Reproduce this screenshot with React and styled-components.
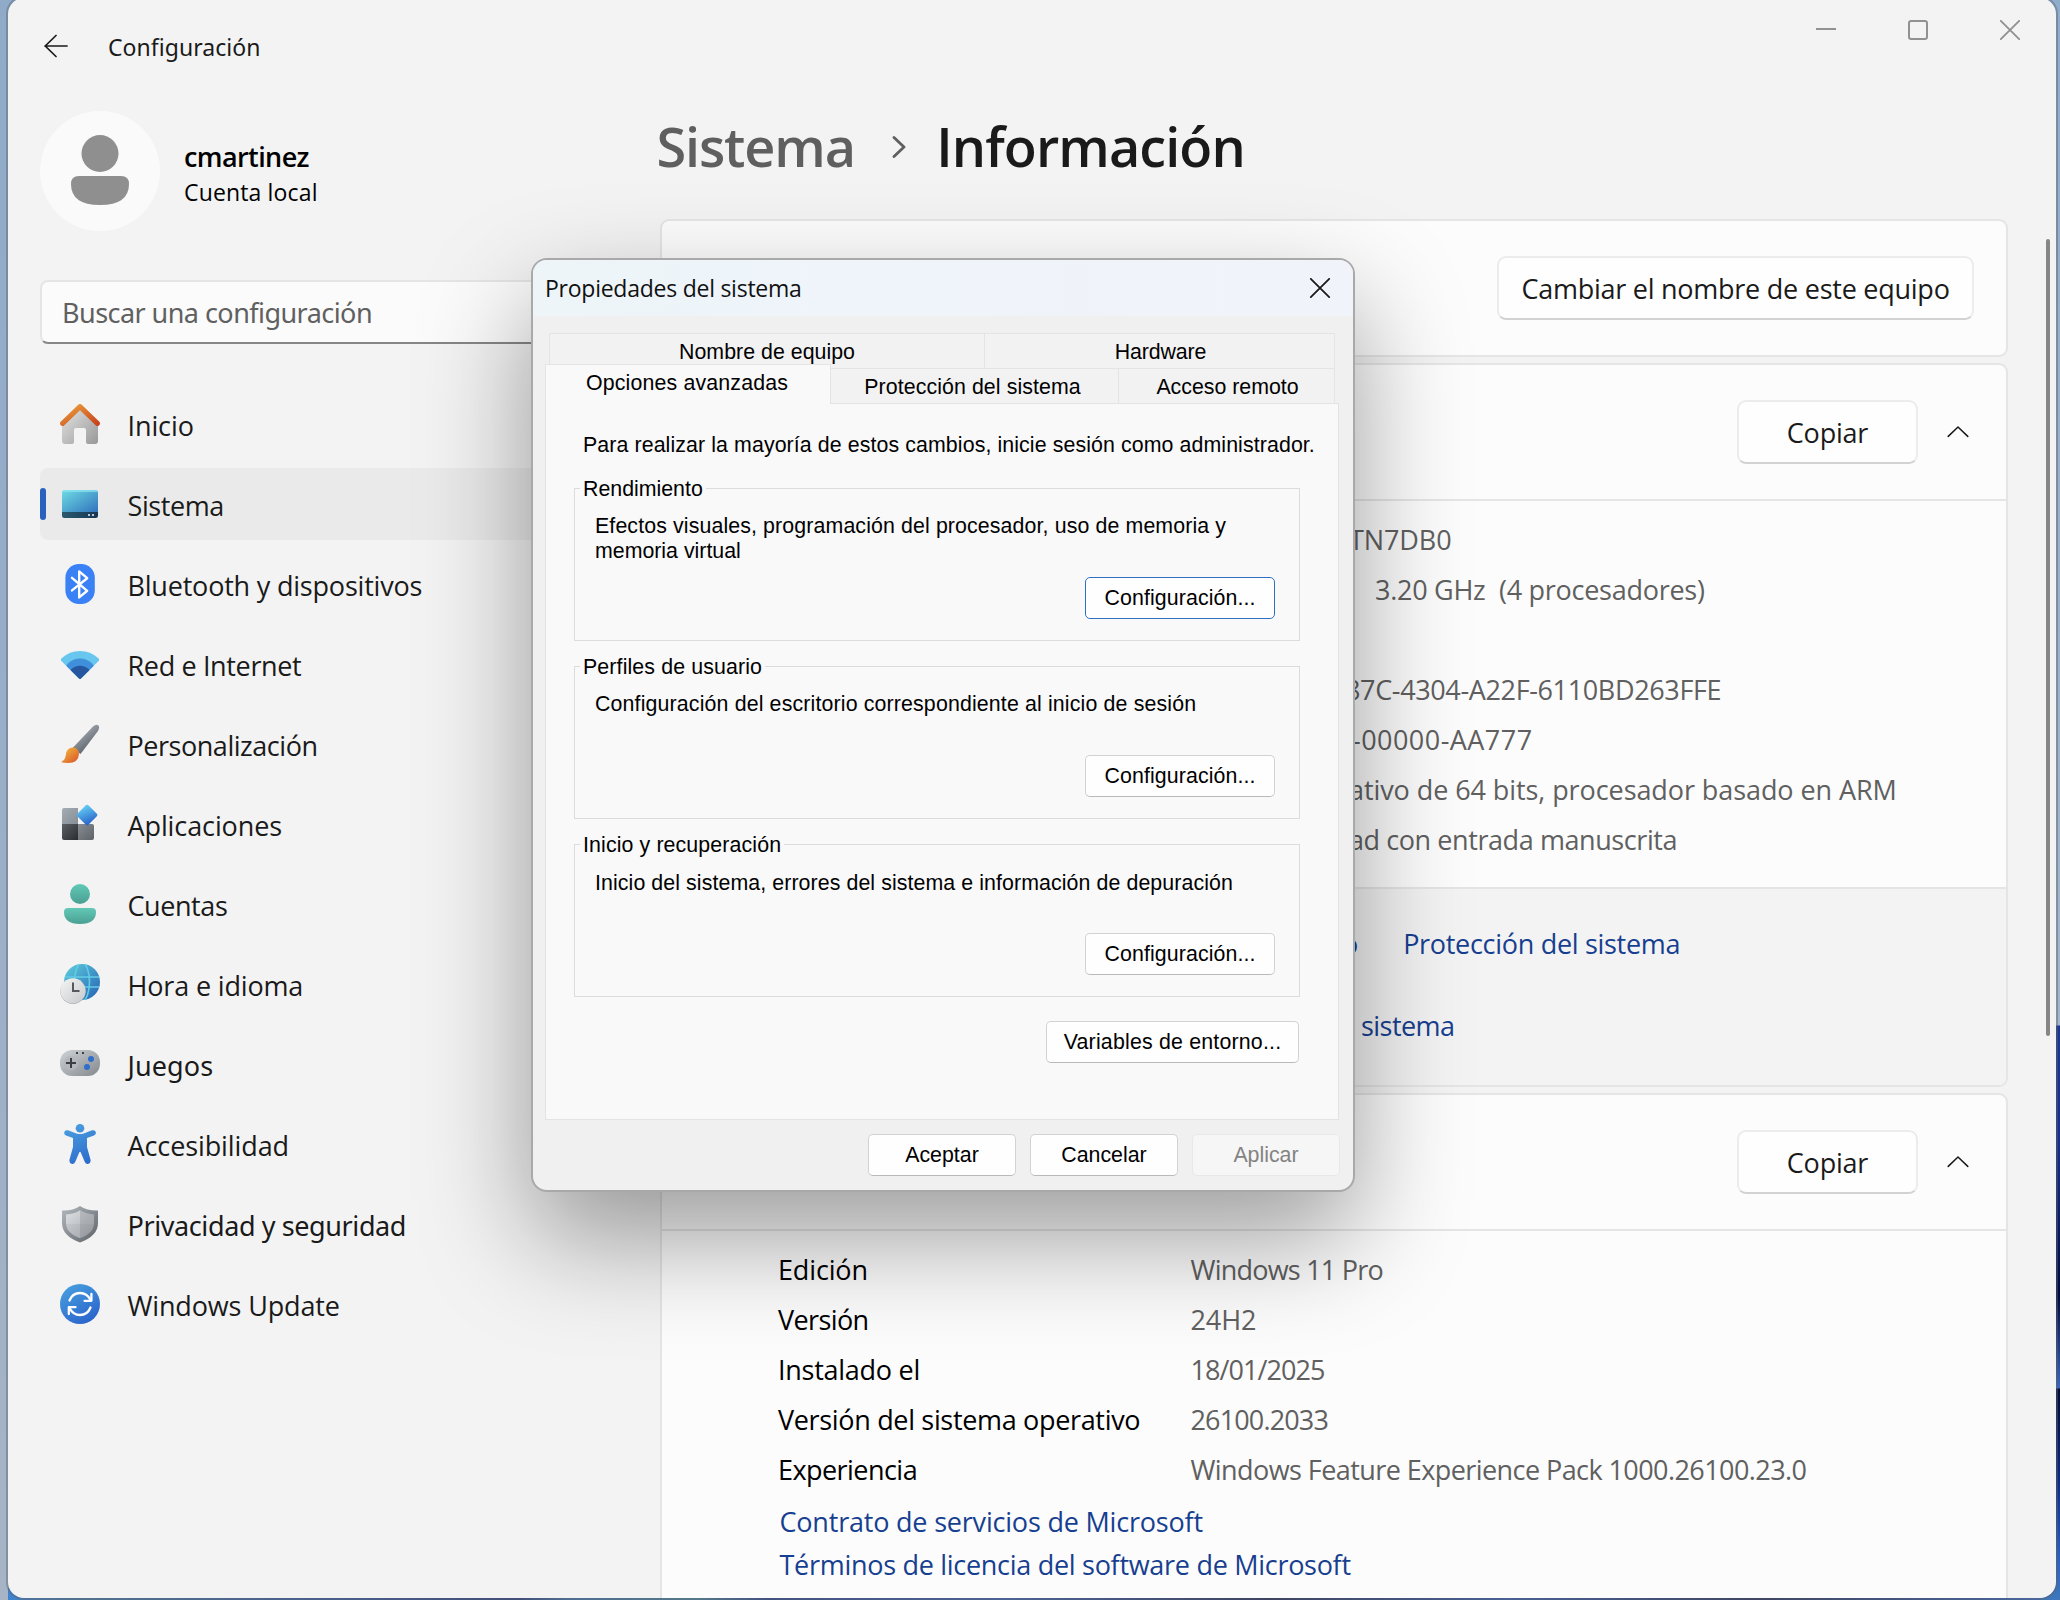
import React from 'react';
import styled, { createGlobalStyle, css } from 'styled-components';

const GlobalStyle = createGlobalStyle`
  *, *::before, *::after { box-sizing: border-box; }
  html, body { margin: 0; padding: 0; }
  body { width: 2060px; height: 1600px; overflow: hidden; }
  button { margin: 0; padding: 0; font: inherit; color: inherit; }
`;

/* ---------- text ---------- */

const HUMANIST = '"Open Sans", "Noto Sans", sans-serif';
const HUMANIST_SINGLE_STOREY = '"Noto Sans", "Open Sans", sans-serif';
const CLASSIC = '"Liberation Sans", Arial, sans-serif';

const TextSpan = styled.span`
  white-space: pre;
  font-family: ${(p) => (p.$single ? HUMANIST_SINGLE_STOREY : HUMANIST)};
  letter-spacing: ${(p) => p.$ls}px;
`;

/* Words with a "g" use the family whose g has a single storey. */
const T = ({ children, ls = -0.1 }) => (
  <TextSpan $single={/g/.test(children)} $ls={ls}>
    {children}
  </TextSpan>
);

const ClassicSpan = styled.span`
  white-space: pre;
  letter-spacing: ${(p) => p.$ls || 0}px;
`;

/* ---------- desktop and window ---------- */

const Desktop = styled.div`
  position: relative;
  width: 2060px;
  height: 1600px;
  overflow: hidden;
  padding: 0 4px 2px 8px;
  background:
    linear-gradient(90deg, #3f83d0 0, #4a7fa8 60px, #3b5a9e 330px, #2f3f7c 510px, #4576ad 560px, #4f8a9c 690px, #33458c 760px, #4263b0 1000px, #2a2c55 1260px, #3b5fae 1500px, #2c2f58 1750px, #3d6cc0 2040px)
      8px 1588px / 2032px 12px no-repeat,
    linear-gradient(180deg, #8fabc8 0, #97adc8 600px, #a6b4c6 1590px) 0 0 / 8px 1600px no-repeat,
    linear-gradient(180deg, #8facca 0, #a3b5cc 1025px, #1c3790 1026px, #16308a 1140px, #020a3e 1295px, #3a66b8 1388px, #050b34 1389px, #0b2a80 1480px, #2a62c0 1560px, #3d78bc 1600px)
      2040px 0 / 20px 1600px no-repeat,
    #8fabc8;
`;

const Window = styled.div`
  display: flex;
  flex-direction: column;
  width: 2048px;
  height: 1600px;
  margin-top: -2px;
  background: #f3f3f3;
  border-radius: 16px;
  box-shadow: 0 0 0 2px rgba(90, 100, 115, 0.45);
  overflow: hidden;
`;

const TitleBar = styled.header`
  display: flex;
  justify-content: space-between;
  flex: none;
  height: 92px;
  padding: 2px 36px 0 36px;
`;

const TitleLeft = styled.div`
  display: flex;
  align-items: center;
  gap: 40px;
  height: 92px;
  font-size: 23px;
  color: #1a1a1a;
`;

const WindowTitle = styled.div`
  padding-top: 2px;
`;

const CaptionButtons = styled.div`
  display: flex;
  gap: 72px;
  padding-top: 20px;
`;

const Body = styled.div`
  display: flex;
  flex: 1;
  min-height: 0;
`;

/* ---------- sidebar ---------- */

const Sidebar = styled.aside`
  display: flex;
  flex-direction: column;
  width: 620px;
  flex: none;
  padding: 21px 20px 0 32px;
`;

const Profile = styled.div`
  display: flex;
  align-items: center;
  gap: 24px;
  height: 120px;
`;

const Avatar = styled.div`
  display: flex;
  width: 120px;
  height: 120px;
  border-radius: 50%;
  background: #fafafa;
`;

const ProfileText = styled.div`
  display: flex;
  flex-direction: column;
  padding-top: 6px;
  color: #000;
`;

const UserName = styled.div`
  font-size: 27px;
  line-height: 35px;
  font-weight: 600;
`;

const UserKind = styled.div`
  font-size: 23px;
  line-height: 32px;
`;

const SearchBox = styled.div`
  display: flex;
  align-items: center;
  height: 64px;
  margin-top: 49px;
  padding: 1px 0 0 20px;
  border: 2px solid #e5e5e5;
  border-bottom-color: #868686;
  border-radius: 8px;
  background: #fbfbfb;
  font-size: 27px;
  color: #606060;
`;

const Nav = styled.nav`
  display: flex;
  flex-direction: column;
  gap: 8px;
  margin-top: 44px;
`;

const NavItem = styled.div`
  display: flex;
  align-items: center;
  height: 72px;
  border-radius: 8px;
  font-size: 27px;
  color: #1a1a1a;
  background: ${(p) => (p.$active ? '#eaeaea' : 'transparent')};
`;

const NavMarker = styled.div`
  width: 6px;
  height: 32px;
  margin-right: 14px;
  border-radius: 3px;
  background: ${(p) => (p.$active ? '#2962bd' : 'transparent')};
`;

const NavLabel = styled.div`
  padding: 2px 0 0 27.5px;
`;

/* ---------- main column ---------- */

const Main = styled.main`
  display: flex;
  flex-direction: column;
  flex: 1;
  padding: 0 48px 0 32px;
`;

const Breadcrumb = styled.h1`
  display: flex;
  align-items: center;
  height: 80px;
  margin: 17px 0 32px -3.5px;
  font-size: 54px;
  line-height: 80px;
  font-weight: 600;
  color: #1a1a1a;
`;

const Crumb = styled.span`
  color: ${(p) => (p.$muted ? '#5f5f5f' : '#1a1a1a')};
`;

const CrumbSeparator = styled.span`
  display: flex;
  margin: 0 30px 0 37.5px;
`;

const Cards = styled.div`
  display: flex;
  flex-direction: column;
  gap: 6px;
`;

const Card = styled.section`
  display: flex;
  flex-direction: column;
  flex: none;
  width: 1348px;
  height: ${(p) => p.$height}px;
  border: 2px solid #e5e5e5;
  border-radius: 9px;
  background: #fcfcfc;
  overflow: hidden;
`;

const CardHeader = styled.div`
  display: flex;
  align-items: center;
  justify-content: flex-end;
  flex: none;
  height: ${(p) => (p.$divided ? 136 : 134)}px;
  padding: 0 ${(p) => (p.$divided ? 36 : 32)}px 0 0;
  border-bottom: ${(p) => (p.$divided ? '2px solid #e5e5e5' : 'none')};
`;

const FluentButton = styled.button`
  display: flex;
  align-items: center;
  justify-content: center;
  width: ${(p) => p.$width}px;
  height: 64px;
  padding-top: 1px;
  border: 2px solid #ececec;
  border-bottom-color: #d2d2d2;
  border-radius: 9px;
  background: #fefefe;
  font-size: 27px;
  color: #1a1a1a;
`;

const Expander = styled.span`
  display: flex;
  margin-left: 28px;
`;

const Details = styled.dl`
  display: flex;
  flex-direction: column;
  flex: none;
  margin: 0;
  padding: 13px 0 0 116px;
  font-size: 27px;
`;

const DetailRow = styled.div`
  display: flex;
  align-items: center;
  height: 50px;
`;

const DetailLabel = styled.dt`
  width: 412px;
  color: #000;
`;

const DetailValue = styled.dd`
  margin: 0 0 0 ${(p) => p.$inset || 0}px;
  color: #606060;
`;

const CardFooter = styled.div`
  display: flex;
  flex-direction: column;
  flex: none;
  height: 198px;
  margin-top: auto;
  padding-top: 14px;
  border-top: 2px solid #e5e5e5;
  background: #f3f3f3;
`;

const FooterRow = styled.div`
  display: flex;
  align-items: center;
  gap: 45px;
  height: 82px;
  padding-left: ${(p) => p.$inset}px;
  font-size: 27px;
`;

const Link = styled.a`
  color: #173f90;
  font-size: 27px;
  line-height: 42px;
`;

const LinkList = styled.div`
  display: flex;
  flex-direction: column;
  padding: 7px 0 0 117.5px;
`;

const ScrollThumb = styled.div`
  position: absolute;
  left: 2046px;
  top: 239px;
  width: 4px;
  height: 797px;
  border-radius: 2px;
  background: #868686;
`;

/* ---------- dialog ---------- */

const Dialog = styled.div`
  position: absolute;
  left: 531px;
  top: 258px;
  display: flex;
  flex-direction: column;
  width: 824px;
  height: 934px;
  border: 2px solid #a9a9a9;
  border-radius: 16px;
  background: #f0f0f0;
  box-shadow: 0 46px 110px rgba(0, 0, 0, 0.38);
  font-family: ${CLASSIC};
  font-size: 21.33px;
  line-height: 25px;
  color: #000;
  overflow: hidden;
`;

const DialogTitle = styled.div`
  display: flex;
  align-items: center;
  justify-content: space-between;
  flex: none;
  height: 56px;
  padding: 0 23px 0 12px;
  background: linear-gradient(90deg, #edf5f9, #f1f3fa);
  font-size: 23px;
  color: #111;
`;

const TabArea = styled.div`
  display: flex;
  flex-direction: column;
  flex: none;
  padding: 17px 14px 0 12px;
`;

const TabRow = styled.div`
  display: flex;
  padding: 0 4px 0 ${(p) => (p.$front ? 0 : 4)}px;
  height: ${(p) => (p.$front ? 36 : 35)}px;
`;

const Tab = styled.div`
  display: flex;
  justify-content: center;
  width: ${(p) => p.$width}px;
  height: 35px;
  margin-top: 0;
  padding-top: 6px;
  padding-left: ${(p) => p.$padLeft || 0}px;
  padding-right: ${(p) => p.$padRight || 0}px;
  border: 1px solid #e4e4e4;
  border-width: 1px 1px 0 0;
  background: #f2f2f2;
  ${(p) =>
    p.$first &&
    css`
      border-left-width: 1px;
    `}
  ${(p) =>
    p.$active &&
    css`
      z-index: 1;
      height: 40px;
      margin-top: -4px;
      border-left-width: 1px;
      background: #f9f9f9;
    `}
`;

const TabPage = styled.div`
  display: flex;
  flex-direction: column;
  height: 717px;
  margin-top: -1px;
  padding: 29px 38px 0 28px;
  border: 1px solid #e3e3e3;
  background: #f9f9f9;
`;

const Notice = styled.p`
  margin: 0 -30px 0 9px;
`;

const Groups = styled.div`
  display: flex;
  flex-direction: column;
  margin-top: 16px;
`;

const Group = styled.fieldset`
  display: flex;
  flex-direction: column;
  height: 167px;
  min-width: 0;
  margin: 0 0 11px;
  padding: 11px 24px 0 20px;
  border: 1px solid #dcdcdc;
`;

const GroupTitle = styled.legend`
  margin-left: -15px;
  padding: 2px 3px 0;
  line-height: 26px;
`;

const GroupText = styled.p`
  margin: 0;
  padding-top: ${(p) => p.$drop}px;
  height: 52px;
`;

const ButtonRow = styled.div`
  display: flex;
  justify-content: flex-end;
  margin: ${(p) => p.$top || 0}px ${(p) => p.$right || 0}px 0 0;
`;

const ClassicButton = styled.button`
  display: flex;
  align-items: center;
  justify-content: center;
  width: ${(p) => p.$width}px;
  height: 42px;
  border: 1px solid ${(p) => (p.$focus ? '#2f6fc4' : p.$disabled ? '#e8e8e8' : '#d2d2d2')};
  border-bottom-color: ${(p) => (p.$focus ? '#2f6fc4' : p.$disabled ? '#e8e8e8' : '#b9b9b9')};
  border-radius: 5px;
  background: ${(p) => (p.$disabled ? '#f6f6f6' : '#fefefe')};
  color: ${(p) => (p.$disabled ? '#838383' : '#000')};
`;

const DialogFooter = styled.div`
  display: flex;
  justify-content: flex-end;
  gap: 14px;
  padding: 14px 13px 0 0;
`;

/* ---------- line glyphs ---------- */

const BackArrow = () => (
  <svg width="24" height="24" viewBox="0 0 24 24" fill="none" stroke="#1a1a1a" strokeWidth="1.7" strokeLinecap="round" strokeLinejoin="round">
    <path d="M1 12H23M12 1.5L1.2 12L12 22.5" />
  </svg>
);

const Cross = ({ color }) => (
  <svg width="20" height="20" viewBox="0 0 20 20" fill="none" stroke={color} strokeWidth="1.8" strokeLinecap="round">
    <path d="M0.8 0.8L19.2 19.2M19.2 0.8L0.8 19.2" />
  </svg>
);

const Minimise = () => (
  <svg width="20" height="20" viewBox="0 0 20 20" fill="none" stroke="#919191" strokeWidth="2">
    <path d="M0 9H20" />
  </svg>
);

const Maximise = () => (
  <svg width="20" height="20" viewBox="0 0 20 20" fill="none" stroke="#919191" strokeWidth="2">
    <rect x="1" y="1" width="18" height="18" rx="2.2" />
  </svg>
);

const ChevronRight = () => (
  <svg width="14" height="22" viewBox="0 0 14 22" fill="none" stroke="#5f5f5f" strokeWidth="2.8" strokeLinecap="round" strokeLinejoin="round">
    <path d="M2 1.5L12 11L2 20.5" />
  </svg>
);

const ChevronUp = () => (
  <svg width="24" height="14" viewBox="0 0 24 14" fill="none" stroke="#1a1a1a" strokeWidth="1.5" strokeLinecap="round" strokeLinejoin="round">
    <path d="M2.2 11.4L12 2L21.8 11.4" />
  </svg>
);

const AvatarGlyph = () => (
  <svg width="120" height="120" viewBox="0 0 120 120" fill="#8f8f8f">
    <circle cx="60" cy="42.5" r="18.5" />
    <path d="M39 65H81Q89 65 89 73Q89 94 60 94Q31 94 31 73Q31 65 39 65Z" />
  </svg>
);

/* ---------- sidebar icons ---------- */

const Icon = ({ children }) => (
  <svg width="40" height="40" viewBox="0 0 40 40" fill="none">
    {children}
  </svg>
);

const Grad = ({ id, from, to, x2 = 1, y2 = 1 }) => (
  <linearGradient id={id} x1="0" y1="0" x2={x2} y2={y2}>
    <stop offset="0" stopColor={from} />
    <stop offset="1" stopColor={to} />
  </linearGradient>
);

const HomeIcon = () => (
  <Icon>
    <defs>
      <Grad id="homeWall" from="#e6e6e6" to="#989898" />
      <Grad id="homeRoof" from="#eca03c" to="#c8441c" />
    </defs>
    <path d="M2 19L20 3L38 19V37Q38 40 35 40H28Q26 40 26 38V26Q26 24 24 24H16Q14 24 14 26V38Q14 40 12 40H5Q2 40 2 37Z" fill="url(#homeWall)" />
    <path d="M2.6 19.4L20 2.6L37.4 19.4" stroke="url(#homeRoof)" strokeWidth="5" strokeLinecap="round" strokeLinejoin="round" />
  </Icon>
);

const SystemIcon = () => (
  <Icon>
    <defs>
      <Grad id="sysScreen" from="#6fdde4" to="#2f70bc" />
      <Grad id="sysBar" from="#2a5a70" to="#163654" x2={1} y2={0} />
      <clipPath id="sysClip">
        <rect x="2" y="6" width="36" height="28" rx="2.5" />
      </clipPath>
    </defs>
    <g clipPath="url(#sysClip)">
      <rect x="2" y="6" width="36" height="23" fill="url(#sysScreen)" />
      <rect x="2" y="6" width="36" height="2" fill="#8fe6f2" opacity="0.7" />
      <rect x="2" y="28" width="36" height="6" fill="url(#sysBar)" />
    </g>
    <rect x="28" y="30" width="2" height="2" fill="#b9c9d6" />
    <rect x="32" y="30" width="2" height="2" fill="#b9c9d6" />
  </Icon>
);

const BluetoothIcon = () => (
  <Icon>
    <rect x="5.4" y="0" width="29.4" height="40" rx="13.5" fill="#3a81f5" />
    <path d="M12 13.8L27.2 26.8L19.2 33.4V7.4L27.2 14.2L12 26.4" stroke="#fff" strokeWidth="2.4" strokeLinecap="round" strokeLinejoin="round" />
  </Icon>
);

const WifiIcon = () => (
  <Icon>
    <defs>
      <clipPath id="wifiClip">
        <path d="M1.4 17Q0.2 15.6 1.6 14.3Q9.5 7 20 7Q30.5 7 38.4 14.3Q39.8 15.6 38.6 17L21.2 34.3Q20 35.5 18.8 34.3Z" />
      </clipPath>
    </defs>
    <g clipPath="url(#wifiClip)">
      <rect width="40" height="40" fill="#69c6ef" />
      <circle cx="20" cy="31" r="16.6" fill="#3f8fda" />
      <circle cx="20" cy="34" r="12.2" fill="#26569f" />
    </g>
  </Icon>
);

const BrushIcon = () => (
  <Icon>
    <defs>
      <Grad id="brushHandle" from="#c3c9cf" to="#4d545b" x2={0.7} y2={1} />
      <Grad id="brushTip" from="#f6c23e" to="#d8502a" />
    </defs>
    <path d="M12.5 24L33 2.4Q36.5 -0.5 38.6 1.8Q39.8 3.8 38 7L20.5 30Z" fill="url(#brushHandle)" />
    <path d="M1 38Q5.5 36 5.8 31Q6.5 23.5 13 23.5Q19 24 19 30Q18.5 39 8 39Q3 39 1 38Z" fill="url(#brushTip)" />
  </Icon>
);

const AppsIcon = () => (
  <Icon>
    <defs>
      <Grad id="appsA" from="#a4acb4" to="#858d95" />
      <Grad id="appsB" from="#5b6167" to="#2a2c2f" />
      <Grad id="appsC" from="#878d93" to="#5d6267" />
      <linearGradient id="appsD" x1="0" y1="0.3" x2="1" y2="0.7">
        <stop offset="0" stopColor="#5fc6f2" />
        <stop offset="1" stopColor="#2c68cc" />
      </linearGradient>
    </defs>
    <path d="M18 20V4H4Q2 4 2 6V20Z" fill="url(#appsA)" />
    <path d="M2 20H18V36H4Q2 36 2 34Z" fill="url(#appsB)" />
    <path d="M18 20H32Q34 20 34 22V34Q34 36 32 36H18Z" fill="url(#appsC)" />
    <rect x="19.3" y="3.3" width="15.6" height="15.6" rx="1.8" transform="rotate(45 27.1 11.1)" fill="url(#appsD)" />
  </Icon>
);

const AccountsIcon = () => (
  <Icon>
    <defs>
      <Grad id="accHead" from="#62c9b6" to="#4a9f92" x2={0} />
    </defs>
    <circle cx="20" cy="10" r="10" fill="url(#accHead)" />
    <path d="M8 24H32Q36 24 36 28Q36 40 20 40Q4 40 4 28Q4 24 8 24Z" fill="url(#accHead)" />
  </Icon>
);

const TimeIcon = () => (
  <Icon>
    <defs>
      <Grad id="globe" from="#5fd0dc" to="#2560b4" />
      <Grad id="clock" from="#f5f5f5" to="#c6c8cb" />
      <clipPath id="globeClip">
        <circle cx="22" cy="18" r="18" />
      </clipPath>
    </defs>
    <circle cx="22" cy="18" r="18" fill="url(#globe)" />
    <g clipPath="url(#globeClip)" stroke="#62cbe6" strokeWidth="1.6">
      <path d="M4 13H40M4 23H40" />
      <ellipse cx="22" cy="18" rx="7.5" ry="19" />
    </g>
    <circle cx="13" cy="27.4" r="12.6" fill="#9fa6ad" />
    <circle cx="13" cy="26.8" r="12.6" fill="url(#clock)" />
    <path d="M13 18.5V27H19.5" stroke="#55585c" strokeWidth="2" />
  </Icon>
);

const GamesIcon = () => (
  <Icon>
    <defs>
      <Grad id="pad" from="#ced3d8" to="#85898e" />
    </defs>
    <rect x="0" y="6" width="40" height="26" rx="12" fill="url(#pad)" />
    <circle cx="11" cy="19" r="7" fill="#b3b8bd" />
    <path d="M11 14V24M6 19H16" stroke="#3c3f43" strokeWidth="2" />
    <rect x="16" y="8" width="2" height="2" fill="#3c3f43" />
    <rect x="22" y="8" width="2" height="2" fill="#3c3f43" />
    <circle cx="31" cy="15" r="3" fill="#2f6fcb" />
    <circle cx="27" cy="23" r="3" fill="#2f6fcb" />
  </Icon>
);

const AccessibilityIcon = () => (
  <Icon>
    <defs>
      <linearGradient id="acs" gradientUnits="userSpaceOnUse" x1="10" y1="0" x2="28" y2="40">
        <stop offset="0" stopColor="#4a9fe0" />
        <stop offset="1" stopColor="#2d6bcb" />
      </linearGradient>
    </defs>
    <circle cx="20" cy="4.3" r="4.3" fill="url(#acs)" />
    <path
      d="M4.2 8.6Q4.8 5.5 8 6.3L17 9.7Q20 10.5 23 9.7L32 6.3Q35.2 5.5 36 8.6Q36 10.5 34 11.4L27 14V23L30.6 36Q31 39.3 28 40Q25.4 40.2 24.6 37.6L20.8 28.6Q20 27 19.2 28.6L15.4 37.6Q14.6 40.2 12 40Q9 39.3 9.4 36L13 23V14L6 11.4Q4 10.5 4.2 8.6Z"
      fill="url(#acs)"
    />
  </Icon>
);

const ShieldIcon = () => (
  <Icon>
    <defs>
      <Grad id="shieldOut" from="#b3b9bf" to="#5d6267" />
      <Grad id="shieldIn" from="#dde0e3" to="#a3a7ab" />
    </defs>
    <path d="M20 2Q27 6.8 38 6.5V19Q38 32 20 38.4Q2 32 2 19V6.5Q13 6.8 20 2Z" fill="url(#shieldOut)" />
    <path d="M20 6.2Q26 10 34 10.5V19Q34 29 20 34.2Q6 29 6 19V10.5Q14 10 20 6.2Z" fill="url(#shieldIn)" />
    <path d="M20 6.2Q26 10 34 10.5V19Q34 29 20 34.2Z" fill="#74797e" opacity="0.25" />
    <path d="M6 20H34Q33 29 20 34.2Q7 29 6 20Z" fill="#74797e" opacity="0.1" />
  </Icon>
);

const UpdateIcon = () => (
  <Icon>
    <defs>
      <Grad id="upd" from="#4aa3e0" to="#2c67cc" x2={0.6} />
    </defs>
    <circle cx="20" cy="20" r="20" fill="url(#upd)" />
    <g stroke="#fff" strokeWidth="2.3" strokeLinecap="round" strokeLinejoin="round">
      <path d="M9.5 16.5Q12.5 9 20 9Q27 9 30.5 16" />
      <path d="M31.4 10V16.8H24.5" />
      <path d="M30.5 23.5Q27.5 31 20 31Q13 31 9.5 24" />
      <path d="M8.8 30V23.2H15.5" />
    </g>
  </Icon>
);

/* ---------- content ---------- */

const NAV = [
  { label: 'Inicio', icon: HomeIcon },
  { label: 'Sistema', icon: SystemIcon, active: true, ls: -0.4 },
  { label: 'Bluetooth y dispositivos', icon: BluetoothIcon, ls: -0.2 },
  { label: 'Red e Internet', icon: WifiIcon, ls: -0.35 },
  { label: 'Personalización', icon: BrushIcon, ls: -0.46 },
  { label: 'Aplicaciones', icon: AppsIcon },
  { label: 'Cuentas', icon: AccountsIcon, ls: -0.42 },
  { label: 'Hora e idioma', icon: TimeIcon, ls: -0.16 },
  { label: 'Juegos', icon: GamesIcon, ls: 0.1 },
  { label: 'Accesibilidad', icon: AccessibilityIcon },
  { label: 'Privacidad y seguridad', icon: ShieldIcon, ls: -0.4 },
  { label: 'Windows Update', icon: UpdateIcon, ls: -0.15 },
];

const DEVICE_ROWS = [
  { value: 'TN7DB0', inset: 571 },
  { value: '3.20 GHz  (4 procesadores)', inset: 597, ls: -0.27 },
  { value: '', inset: 571 },
  { value: '87C-4304-A22F-6110BD263FFE', inset: 567, ls: -0.36 },
  { value: '-00000-AA777', inset: 574, ls: 0.46 },
  { value: 'ativo de 64 bits, procesador basado en ARM', inset: 571, ls: -0.08 },
  { value: 'ad con entrada manuscrita', inset: 571, ls: -0.42 },
];

const WINDOWS_ROWS = [
  { label: 'Edición', labelLs: -0.15, value: 'Windows 11 Pro', valueLs: -0.78 },
  { label: 'Versión', labelLs: -0.6, value: '24H2' },
  { label: 'Instalado el', labelLs: -0.27, value: '18/01/2025', valueLs: -0.94 },
  { label: 'Versión del sistema operativo', labelLs: -0.33, value: '26100.2033', valueLs: -0.85 },
  { label: 'Experiencia', labelLs: -0.55, value: 'Windows Feature Experience Pack 1000.26100.23.0', valueLs: -0.57 },
];

const GROUPS = [
  {
    title: 'Rendimiento',
    lines: [
      { text: 'Efectos visuales, programación del procesador, uso de memoria y', ls: 0.12 },
      { text: 'memoria virtual', ls: 0 },
    ],
    focus: true,
    drop: 1,
  },
  {
    title: 'Perfiles de usuario',
    titleLs: 0.13,
    lines: [{ text: 'Configuración del escritorio correspondiente al inicio de sesión', ls: 0.15 }],
    drop: 1,
  },
  {
    title: 'Inicio y recuperación',
    titleLs: 0.12,
    lines: [{ text: 'Inicio del sistema, errores del sistema e información de depuración', ls: 0.09 }],
    drop: 2,
  },
];

const SystemProperties = () => (
  <Dialog>
    <DialogTitle>
      <T ls={-0.25}>Propiedades del sistema</T>
      <Cross color="#1a1a1a" />
    </DialogTitle>
    <TabArea>
      <TabRow>
        <Tab $first $width={436}>
          <ClassicSpan $ls={0.03}>Nombre de equipo</ClassicSpan>
        </Tab>
        <Tab $width={350} $padLeft={2}>
          <ClassicSpan $ls={-0.1}>Hardware</ClassicSpan>
        </Tab>
      </TabRow>
      <TabRow $front>
        <Tab $active $width={286} $padRight={2}>
          <ClassicSpan $ls={0.16}>Opciones avanzadas</ClassicSpan>
        </Tab>
        <Tab $width={288} $padRight={4}>
          <ClassicSpan $ls={0.09}>Protección del sistema</ClassicSpan>
        </Tab>
        <Tab $width={216} $padLeft={2}>
          <ClassicSpan>Acceso remoto</ClassicSpan>
        </Tab>
      </TabRow>
      <TabPage>
        <Notice>
          <ClassicSpan $ls={0.1}>Para realizar la mayoría de estos cambios, inicie sesión como administrador.</ClassicSpan>
        </Notice>
        <Groups>
          {GROUPS.map((g) => (
            <Group key={g.title}>
              <GroupTitle>
                <ClassicSpan $ls={g.titleLs}>{g.title}</ClassicSpan>
              </GroupTitle>
              <GroupText $drop={g.drop}>
                {g.lines.map((line, i) => (
                  <React.Fragment key={line.text}>
                    {i > 0 && <br />}
                    <ClassicSpan $ls={line.ls}>{line.text}</ClassicSpan>
                  </React.Fragment>
                ))}
              </GroupText>
              <ButtonRow $top={12}>
                <ClassicButton $width={190} $focus={g.focus}>
                  <ClassicSpan $ls={0.1}>Configuración...</ClassicSpan>
                </ClassicButton>
              </ButtonRow>
            </Group>
          ))}
        </Groups>
        <ButtonRow $top={13} $right={1}>
          <ClassicButton $width={253}>
            <ClassicSpan $ls={0.2}>Variables de entorno...</ClassicSpan>
          </ClassicButton>
        </ButtonRow>
      </TabPage>
    </TabArea>
    <DialogFooter>
      <ClassicButton $width={148}>Aceptar</ClassicButton>
      <ClassicButton $width={148}>Cancelar</ClassicButton>
      <ClassicButton $width={148} $disabled>
        Aplicar
      </ClassicButton>
    </DialogFooter>
  </Dialog>
);

const CopyHeader = () => (
  <CardHeader $divided>
    <FluentButton $width={181}>
      <T ls={-0.2}>Copiar</T>
    </FluentButton>
    <Expander>
      <ChevronUp />
    </Expander>
  </CardHeader>
);

export default function App() {
  return (
    <Desktop>
      <GlobalStyle />
      <Window>
        <TitleBar>
          <TitleLeft>
            <BackArrow />
            <WindowTitle>
              <T ls={0.05}>Configuración</T>
            </WindowTitle>
          </TitleLeft>
          <CaptionButtons>
            <Minimise />
            <Maximise />
            <Cross color="#919191" />
          </CaptionButtons>
        </TitleBar>
        <Body>
          <Sidebar>
            <Profile>
              <Avatar>
                <AvatarGlyph />
              </Avatar>
              <ProfileText>
                <UserName>
                  <T ls={-0.6}>cmartinez</T>
                </UserName>
                <UserKind>
                  <T ls={0.15}>Cuenta local</T>
                </UserKind>
              </ProfileText>
            </Profile>
            <SearchBox>
              <T ls={-0.55}>Buscar una configuración</T>
            </SearchBox>
            <Nav>
              {NAV.map(({ label, icon: Glyph, active, ls }) => (
                <NavItem key={label} $active={active}>
                  <NavMarker $active={active} />
                  <Glyph />
                  <NavLabel>
                    <T ls={ls}>{label}</T>
                  </NavLabel>
                </NavItem>
              ))}
            </Nav>
          </Sidebar>
          <Main>
            <Breadcrumb>
              <Crumb $muted>
                <T ls={-1.15}>Sistema</T>
              </Crumb>
              <CrumbSeparator>
                <ChevronRight />
              </CrumbSeparator>
              <Crumb>
                <T ls={-0.92}>Información</T>
              </Crumb>
            </Breadcrumb>
            <Cards>
              <Card $height={138}>
                <CardHeader>
                  <FluentButton $width={477}>
                    <T ls={-0.25}>Cambiar el nombre de este equipo</T>
                  </FluentButton>
                </CardHeader>
              </Card>
              <Card $height={724}>
                <CopyHeader />
                <Details>
                  {DEVICE_ROWS.map((row, i) => (
                    <DetailRow key={i}>
                      <DetailValue $inset={row.inset}>
                        <T ls={row.ls}>{row.value}</T>
                      </DetailValue>
                    </DetailRow>
                  ))}
                </Details>
                <CardFooter>
                  <FooterRow $inset={680}>
                    <Link>
                      <T>o</T>
                    </Link>
                    <Link>
                      <T ls={-0.3}>Protección del sistema</T>
                    </Link>
                  </FooterRow>
                  <FooterRow $inset={699}>
                    <Link>
                      <T ls={-0.55}>sistema</T>
                    </Link>
                  </FooterRow>
                </CardFooter>
              </Card>
              <Card $height={700}>
                <CopyHeader />
                <Details>
                  {WINDOWS_ROWS.map((row) => (
                    <DetailRow key={row.label}>
                      <DetailLabel>
                        <T ls={row.labelLs}>{row.label}</T>
                      </DetailLabel>
                      <DetailValue $inset={0.5}>
                        <T ls={row.valueLs}>{row.value}</T>
                      </DetailValue>
                    </DetailRow>
                  ))}
                </Details>
                <LinkList>
                  <Link>
                    <T ls={-0.2}>Contrato de servicios de Microsoft</T>
                  </Link>
                  <Link>
                    <T ls={-0.29}>Términos de licencia del software de Microsoft</T>
                  </Link>
                </LinkList>
              </Card>
            </Cards>
          </Main>
        </Body>
      </Window>
      <ScrollThumb />
      <SystemProperties />
    </Desktop>
  );
}
